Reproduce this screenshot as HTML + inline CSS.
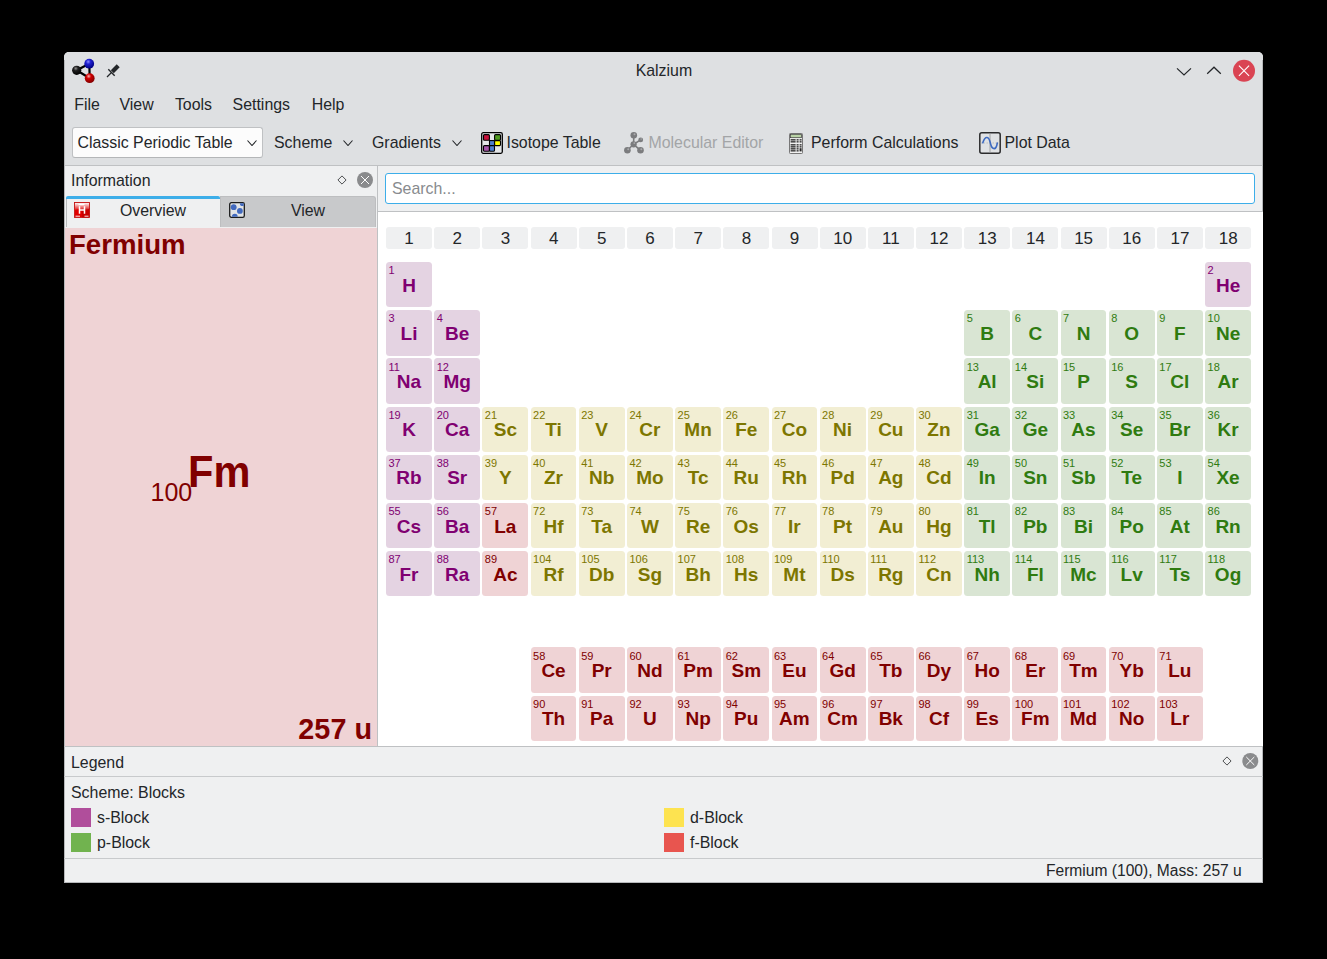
<!DOCTYPE html>
<html><head><meta charset="utf-8"><title>Kalzium</title>
<style>
html,body{margin:0;padding:0}
body{width:1327px;height:959px;background:#000;position:relative;overflow:hidden;font-family:"Liberation Sans",sans-serif;color:#232629}
.t{position:absolute;line-height:1;white-space:nowrap}
.r{position:absolute}
.svg{position:absolute}
.cell{position:absolute;width:45.8px;height:45.4px;border-radius:3.5px}
.cell .n{position:absolute;left:2.4px;top:3.3px;font-size:11px;line-height:1}
.cell .s{position:absolute;left:0;width:45.8px;text-align:center;top:14.3px;font-size:19px;line-height:1;font-weight:700}
.gh{position:absolute;top:227px;width:46px;height:22px;background:#eff0f1;border-radius:3px;font-size:17px;line-height:24px;text-align:center;color:#232629}
.s1{background:#e4d3e2;color:#800071}
.d1{background:#f2eed3;color:#7d7600}
.p1{background:#d9e5d3;color:#2f7b10}
.f1{background:#efd3d5;color:#800000}
</style></head><body>
<div class="r" style="left:64px;top:52px;width:1199px;height:831px;background:#eff0f1;border-radius:5px 5px 0 0;"></div>
<div class="r" style="left:64px;top:52px;width:1199px;height:113px;background:#dee0e2;border-radius:5px 5px 0 0;"></div>
<div class="r" style="left:64px;top:165px;width:1199px;height:1px;background:#bfc1c3;"></div>
<div class="r" style="left:64px;top:60px;width:1px;height:823px;background:#b6b8ba;"></div>
<div class="r" style="left:1262px;top:60px;width:1px;height:823px;background:#b6b8ba;"></div>
<div class="r" style="left:64px;top:882px;width:1199px;height:1px;background:#b6b8ba;"></div>
<div class="t" style="left:563.90px;width:200px;text-align:center;top:62.84px;font-size:15.9px;">Kalzium</div>
<div class="t" style="left:74.3px;top:96.84px;font-size:15.9px;">File</div>
<div class="t" style="left:119.5px;top:96.84px;font-size:15.9px;">View</div>
<div class="t" style="left:174.9px;top:96.84px;font-size:15.9px;">Tools</div>
<div class="t" style="left:232.6px;top:96.84px;font-size:15.9px;">Settings</div>
<div class="t" style="left:311.7px;top:96.84px;font-size:15.9px;">Help</div>
<div class="r" style="left:72px;top:127px;width:191px;height:31px;background:#fcfcfc;border:1px solid #bfc1c3;border-bottom-color:#b4b6b8;box-sizing:border-box;border-radius:3px;"></div>
<div class="t" style="left:77.5px;top:134.84px;font-size:15.9px;">Classic Periodic Table</div>
<svg class="svg" style="left:247px;top:139.6px" width="10" height="6" viewBox="0 0 10 6"><path d="M0.5 0.5 L5.0 5.5 L9.5 0.5" fill="none" stroke="#232629" stroke-width="1.1"/></svg>
<div class="t" style="left:274px;top:134.84px;font-size:15.9px;">Scheme</div>
<svg class="svg" style="left:343px;top:139.6px" width="10" height="6" viewBox="0 0 10 6"><path d="M0.5 0.5 L5.0 5.5 L9.5 0.5" fill="none" stroke="#232629" stroke-width="1.1"/></svg>
<div class="t" style="left:372px;top:134.84px;font-size:15.9px;">Gradients</div>
<svg class="svg" style="left:452px;top:139.6px" width="10" height="6" viewBox="0 0 10 6"><path d="M0.5 0.5 L5.0 5.5 L9.5 0.5" fill="none" stroke="#232629" stroke-width="1.1"/></svg>
<div class="t" style="left:506.5px;top:134.84px;font-size:15.9px;">Isotope Table</div>
<div class="t" style="left:648.5px;top:134.84px;font-size:15.9px;color:#a3a5a7;">Molecular Editor</div>
<div class="t" style="left:811px;top:134.84px;font-size:15.9px;">Perform Calculations</div>
<div class="t" style="left:1004.5px;top:134.84px;font-size:15.9px;">Plot Data</div>
<div class="t" style="left:71px;top:172.54px;font-size:15.9px;">Information</div>
<div class="r" style="left:377px;top:166px;width:1px;height:580px;background:#bfc1c3;"></div>
<div class="r" style="left:66px;top:196px;width:154px;height:32px;background:#eff0f1;"></div>
<div class="r" style="left:66px;top:199px;width:1px;height:28px;background:#b8babc;"></div>
<div class="r" style="left:66px;top:196px;width:154px;height:3px;background:#3daee9;border-radius:2px 2px 0 0;"></div>
<div class="r" style="left:220px;top:196px;width:156px;height:31px;background:#c8c9cb;border:1px solid #bdbec0;border-bottom:none;box-sizing:border-box;border-radius:0 3px 0 0;"></div>
<div class="t" style="left:103.00px;width:100px;text-align:center;top:202.54px;font-size:15.9px;">Overview</div>
<div class="t" style="left:258.00px;width:100px;text-align:center;top:202.54px;font-size:15.9px;">View</div>
<div class="r" style="left:65px;top:228px;width:312px;height:518px;background:#efd3d5;"></div>
<div class="t" style="left:69px;top:230.84px;font-size:27.6px;font-weight:700;color:#800000;">Fermium</div>
<div class="t" style="left:150.5px;top:480.04px;font-size:25px;color:#800000;">100</div>
<div class="t" style="left:188.2px;top:451.38px;font-size:43.5px;font-weight:700;color:#800000;transform:scaleX(0.955);transform-origin:0 0;">Fm</div>
<div class="t" style="left:222.00px;width:150px;text-align:right;top:714.82px;font-size:28.8px;font-weight:700;color:#800000;">257 u</div>
<div class="r" style="left:385px;top:173px;width:870px;height:31px;background:#fff;border:1px solid #3daee9;box-sizing:border-box;border-radius:3px;"></div>
<div class="t" style="left:392px;top:180.84px;font-size:15.9px;color:#888b8e;">Search...</div>
<div class="r" style="left:378px;top:211px;width:885px;height:1px;background:#bfc1c3;"></div>
<div class="r" style="left:378px;top:212px;width:885px;height:534px;background:#ffffff;"></div>
<div class="r" style="left:64px;top:746px;width:1199px;height:1px;background:#bfc1c3;"></div>
<div class="gh" style="left:386.10px">1</div>
<div class="gh" style="left:434.28px">2</div>
<div class="gh" style="left:482.46px">3</div>
<div class="gh" style="left:530.64px">4</div>
<div class="gh" style="left:578.82px">5</div>
<div class="gh" style="left:627.00px">6</div>
<div class="gh" style="left:675.18px">7</div>
<div class="gh" style="left:723.36px">8</div>
<div class="gh" style="left:771.54px">9</div>
<div class="gh" style="left:819.72px">10</div>
<div class="gh" style="left:867.90px">11</div>
<div class="gh" style="left:916.08px">12</div>
<div class="gh" style="left:964.26px">13</div>
<div class="gh" style="left:1012.44px">14</div>
<div class="gh" style="left:1060.62px">15</div>
<div class="gh" style="left:1108.80px">16</div>
<div class="gh" style="left:1156.98px">17</div>
<div class="gh" style="left:1205.16px">18</div>
<div class="cell s1" style="left:386.10px;top:262.00px"><div class="n">1</div><div class="s" style="top:14.22px">H</div></div>
<div class="cell s1" style="left:1205.16px;top:262.00px"><div class="n">2</div><div class="s" style="top:14.22px">He</div></div>
<div class="cell s1" style="left:386.10px;top:310.18px"><div class="n">3</div><div class="s" style="top:14.04px">Li</div></div>
<div class="cell s1" style="left:434.28px;top:310.18px"><div class="n">4</div><div class="s" style="top:14.04px">Be</div></div>
<div class="cell p1" style="left:964.26px;top:310.18px"><div class="n">5</div><div class="s" style="top:14.04px">B</div></div>
<div class="cell p1" style="left:1012.44px;top:310.18px"><div class="n">6</div><div class="s" style="top:14.04px">C</div></div>
<div class="cell p1" style="left:1060.62px;top:310.18px"><div class="n">7</div><div class="s" style="top:14.04px">N</div></div>
<div class="cell p1" style="left:1108.80px;top:310.18px"><div class="n">8</div><div class="s" style="top:14.04px">O</div></div>
<div class="cell p1" style="left:1156.98px;top:310.18px"><div class="n">9</div><div class="s" style="top:14.04px">F</div></div>
<div class="cell p1" style="left:1205.16px;top:310.18px"><div class="n">10</div><div class="s" style="top:14.04px">Ne</div></div>
<div class="cell s1" style="left:386.10px;top:358.36px"><div class="n">11</div><div class="s" style="top:13.86px">Na</div></div>
<div class="cell s1" style="left:434.28px;top:358.36px"><div class="n">12</div><div class="s" style="top:13.86px">Mg</div></div>
<div class="cell p1" style="left:964.26px;top:358.36px"><div class="n">13</div><div class="s" style="top:13.86px">Al</div></div>
<div class="cell p1" style="left:1012.44px;top:358.36px"><div class="n">14</div><div class="s" style="top:13.86px">Si</div></div>
<div class="cell p1" style="left:1060.62px;top:358.36px"><div class="n">15</div><div class="s" style="top:13.86px">P</div></div>
<div class="cell p1" style="left:1108.80px;top:358.36px"><div class="n">16</div><div class="s" style="top:13.86px">S</div></div>
<div class="cell p1" style="left:1156.98px;top:358.36px"><div class="n">17</div><div class="s" style="top:13.86px">Cl</div></div>
<div class="cell p1" style="left:1205.16px;top:358.36px"><div class="n">18</div><div class="s" style="top:13.86px">Ar</div></div>
<div class="cell s1" style="left:386.10px;top:406.54px"><div class="n">19</div><div class="s" style="top:13.68px">K</div></div>
<div class="cell s1" style="left:434.28px;top:406.54px"><div class="n">20</div><div class="s" style="top:13.68px">Ca</div></div>
<div class="cell d1" style="left:482.46px;top:406.54px"><div class="n">21</div><div class="s" style="top:13.68px">Sc</div></div>
<div class="cell d1" style="left:530.64px;top:406.54px"><div class="n">22</div><div class="s" style="top:13.68px">Ti</div></div>
<div class="cell d1" style="left:578.82px;top:406.54px"><div class="n">23</div><div class="s" style="top:13.68px">V</div></div>
<div class="cell d1" style="left:627.00px;top:406.54px"><div class="n">24</div><div class="s" style="top:13.68px">Cr</div></div>
<div class="cell d1" style="left:675.18px;top:406.54px"><div class="n">25</div><div class="s" style="top:13.68px">Mn</div></div>
<div class="cell d1" style="left:723.36px;top:406.54px"><div class="n">26</div><div class="s" style="top:13.68px">Fe</div></div>
<div class="cell d1" style="left:771.54px;top:406.54px"><div class="n">27</div><div class="s" style="top:13.68px">Co</div></div>
<div class="cell d1" style="left:819.72px;top:406.54px"><div class="n">28</div><div class="s" style="top:13.68px">Ni</div></div>
<div class="cell d1" style="left:867.90px;top:406.54px"><div class="n">29</div><div class="s" style="top:13.68px">Cu</div></div>
<div class="cell d1" style="left:916.08px;top:406.54px"><div class="n">30</div><div class="s" style="top:13.68px">Zn</div></div>
<div class="cell p1" style="left:964.26px;top:406.54px"><div class="n">31</div><div class="s" style="top:13.68px">Ga</div></div>
<div class="cell p1" style="left:1012.44px;top:406.54px"><div class="n">32</div><div class="s" style="top:13.68px">Ge</div></div>
<div class="cell p1" style="left:1060.62px;top:406.54px"><div class="n">33</div><div class="s" style="top:13.68px">As</div></div>
<div class="cell p1" style="left:1108.80px;top:406.54px"><div class="n">34</div><div class="s" style="top:13.68px">Se</div></div>
<div class="cell p1" style="left:1156.98px;top:406.54px"><div class="n">35</div><div class="s" style="top:13.68px">Br</div></div>
<div class="cell p1" style="left:1205.16px;top:406.54px"><div class="n">36</div><div class="s" style="top:13.68px">Kr</div></div>
<div class="cell s1" style="left:386.10px;top:454.72px"><div class="n">37</div><div class="s" style="top:13.50px">Rb</div></div>
<div class="cell s1" style="left:434.28px;top:454.72px"><div class="n">38</div><div class="s" style="top:13.50px">Sr</div></div>
<div class="cell d1" style="left:482.46px;top:454.72px"><div class="n">39</div><div class="s" style="top:13.50px">Y</div></div>
<div class="cell d1" style="left:530.64px;top:454.72px"><div class="n">40</div><div class="s" style="top:13.50px">Zr</div></div>
<div class="cell d1" style="left:578.82px;top:454.72px"><div class="n">41</div><div class="s" style="top:13.50px">Nb</div></div>
<div class="cell d1" style="left:627.00px;top:454.72px"><div class="n">42</div><div class="s" style="top:13.50px">Mo</div></div>
<div class="cell d1" style="left:675.18px;top:454.72px"><div class="n">43</div><div class="s" style="top:13.50px">Tc</div></div>
<div class="cell d1" style="left:723.36px;top:454.72px"><div class="n">44</div><div class="s" style="top:13.50px">Ru</div></div>
<div class="cell d1" style="left:771.54px;top:454.72px"><div class="n">45</div><div class="s" style="top:13.50px">Rh</div></div>
<div class="cell d1" style="left:819.72px;top:454.72px"><div class="n">46</div><div class="s" style="top:13.50px">Pd</div></div>
<div class="cell d1" style="left:867.90px;top:454.72px"><div class="n">47</div><div class="s" style="top:13.50px">Ag</div></div>
<div class="cell d1" style="left:916.08px;top:454.72px"><div class="n">48</div><div class="s" style="top:13.50px">Cd</div></div>
<div class="cell p1" style="left:964.26px;top:454.72px"><div class="n">49</div><div class="s" style="top:13.50px">In</div></div>
<div class="cell p1" style="left:1012.44px;top:454.72px"><div class="n">50</div><div class="s" style="top:13.50px">Sn</div></div>
<div class="cell p1" style="left:1060.62px;top:454.72px"><div class="n">51</div><div class="s" style="top:13.50px">Sb</div></div>
<div class="cell p1" style="left:1108.80px;top:454.72px"><div class="n">52</div><div class="s" style="top:13.50px">Te</div></div>
<div class="cell p1" style="left:1156.98px;top:454.72px"><div class="n">53</div><div class="s" style="top:13.50px">I</div></div>
<div class="cell p1" style="left:1205.16px;top:454.72px"><div class="n">54</div><div class="s" style="top:13.50px">Xe</div></div>
<div class="cell s1" style="left:386.10px;top:502.90px"><div class="n">55</div><div class="s" style="top:14.32px">Cs</div></div>
<div class="cell s1" style="left:434.28px;top:502.90px"><div class="n">56</div><div class="s" style="top:14.32px">Ba</div></div>
<div class="cell f1" style="left:482.46px;top:502.90px"><div class="n">57</div><div class="s" style="top:14.32px">La</div></div>
<div class="cell f1" style="left:530.64px;top:647.44px"><div class="n">58</div><div class="s" style="top:13.78px">Ce</div></div>
<div class="cell f1" style="left:578.82px;top:647.44px"><div class="n">59</div><div class="s" style="top:13.78px">Pr</div></div>
<div class="cell f1" style="left:627.00px;top:647.44px"><div class="n">60</div><div class="s" style="top:13.78px">Nd</div></div>
<div class="cell f1" style="left:675.18px;top:647.44px"><div class="n">61</div><div class="s" style="top:13.78px">Pm</div></div>
<div class="cell f1" style="left:723.36px;top:647.44px"><div class="n">62</div><div class="s" style="top:13.78px">Sm</div></div>
<div class="cell f1" style="left:771.54px;top:647.44px"><div class="n">63</div><div class="s" style="top:13.78px">Eu</div></div>
<div class="cell f1" style="left:819.72px;top:647.44px"><div class="n">64</div><div class="s" style="top:13.78px">Gd</div></div>
<div class="cell f1" style="left:867.90px;top:647.44px"><div class="n">65</div><div class="s" style="top:13.78px">Tb</div></div>
<div class="cell f1" style="left:916.08px;top:647.44px"><div class="n">66</div><div class="s" style="top:13.78px">Dy</div></div>
<div class="cell f1" style="left:964.26px;top:647.44px"><div class="n">67</div><div class="s" style="top:13.78px">Ho</div></div>
<div class="cell f1" style="left:1012.44px;top:647.44px"><div class="n">68</div><div class="s" style="top:13.78px">Er</div></div>
<div class="cell f1" style="left:1060.62px;top:647.44px"><div class="n">69</div><div class="s" style="top:13.78px">Tm</div></div>
<div class="cell f1" style="left:1108.80px;top:647.44px"><div class="n">70</div><div class="s" style="top:13.78px">Yb</div></div>
<div class="cell f1" style="left:1156.98px;top:647.44px"><div class="n">71</div><div class="s" style="top:13.78px">Lu</div></div>
<div class="cell d1" style="left:530.64px;top:502.90px"><div class="n">72</div><div class="s" style="top:14.32px">Hf</div></div>
<div class="cell d1" style="left:578.82px;top:502.90px"><div class="n">73</div><div class="s" style="top:14.32px">Ta</div></div>
<div class="cell d1" style="left:627.00px;top:502.90px"><div class="n">74</div><div class="s" style="top:14.32px">W</div></div>
<div class="cell d1" style="left:675.18px;top:502.90px"><div class="n">75</div><div class="s" style="top:14.32px">Re</div></div>
<div class="cell d1" style="left:723.36px;top:502.90px"><div class="n">76</div><div class="s" style="top:14.32px">Os</div></div>
<div class="cell d1" style="left:771.54px;top:502.90px"><div class="n">77</div><div class="s" style="top:14.32px">Ir</div></div>
<div class="cell d1" style="left:819.72px;top:502.90px"><div class="n">78</div><div class="s" style="top:14.32px">Pt</div></div>
<div class="cell d1" style="left:867.90px;top:502.90px"><div class="n">79</div><div class="s" style="top:14.32px">Au</div></div>
<div class="cell d1" style="left:916.08px;top:502.90px"><div class="n">80</div><div class="s" style="top:14.32px">Hg</div></div>
<div class="cell p1" style="left:964.26px;top:502.90px"><div class="n">81</div><div class="s" style="top:14.32px">Tl</div></div>
<div class="cell p1" style="left:1012.44px;top:502.90px"><div class="n">82</div><div class="s" style="top:14.32px">Pb</div></div>
<div class="cell p1" style="left:1060.62px;top:502.90px"><div class="n">83</div><div class="s" style="top:14.32px">Bi</div></div>
<div class="cell p1" style="left:1108.80px;top:502.90px"><div class="n">84</div><div class="s" style="top:14.32px">Po</div></div>
<div class="cell p1" style="left:1156.98px;top:502.90px"><div class="n">85</div><div class="s" style="top:14.32px">At</div></div>
<div class="cell p1" style="left:1205.16px;top:502.90px"><div class="n">86</div><div class="s" style="top:14.32px">Rn</div></div>
<div class="cell s1" style="left:386.10px;top:551.08px"><div class="n">87</div><div class="s" style="top:14.14px">Fr</div></div>
<div class="cell s1" style="left:434.28px;top:551.08px"><div class="n">88</div><div class="s" style="top:14.14px">Ra</div></div>
<div class="cell f1" style="left:482.46px;top:551.08px"><div class="n">89</div><div class="s" style="top:14.14px">Ac</div></div>
<div class="cell f1" style="left:530.64px;top:695.62px"><div class="n">90</div><div class="s" style="top:13.60px">Th</div></div>
<div class="cell f1" style="left:578.82px;top:695.62px"><div class="n">91</div><div class="s" style="top:13.60px">Pa</div></div>
<div class="cell f1" style="left:627.00px;top:695.62px"><div class="n">92</div><div class="s" style="top:13.60px">U</div></div>
<div class="cell f1" style="left:675.18px;top:695.62px"><div class="n">93</div><div class="s" style="top:13.60px">Np</div></div>
<div class="cell f1" style="left:723.36px;top:695.62px"><div class="n">94</div><div class="s" style="top:13.60px">Pu</div></div>
<div class="cell f1" style="left:771.54px;top:695.62px"><div class="n">95</div><div class="s" style="top:13.60px">Am</div></div>
<div class="cell f1" style="left:819.72px;top:695.62px"><div class="n">96</div><div class="s" style="top:13.60px">Cm</div></div>
<div class="cell f1" style="left:867.90px;top:695.62px"><div class="n">97</div><div class="s" style="top:13.60px">Bk</div></div>
<div class="cell f1" style="left:916.08px;top:695.62px"><div class="n">98</div><div class="s" style="top:13.60px">Cf</div></div>
<div class="cell f1" style="left:964.26px;top:695.62px"><div class="n">99</div><div class="s" style="top:13.60px">Es</div></div>
<div class="cell f1" style="left:1012.44px;top:695.62px"><div class="n">100</div><div class="s" style="top:13.60px">Fm</div></div>
<div class="cell f1" style="left:1060.62px;top:695.62px"><div class="n">101</div><div class="s" style="top:13.60px">Md</div></div>
<div class="cell f1" style="left:1108.80px;top:695.62px"><div class="n">102</div><div class="s" style="top:13.60px">No</div></div>
<div class="cell f1" style="left:1156.98px;top:695.62px"><div class="n">103</div><div class="s" style="top:13.60px">Lr</div></div>
<div class="cell d1" style="left:530.64px;top:551.08px"><div class="n">104</div><div class="s" style="top:14.14px">Rf</div></div>
<div class="cell d1" style="left:578.82px;top:551.08px"><div class="n">105</div><div class="s" style="top:14.14px">Db</div></div>
<div class="cell d1" style="left:627.00px;top:551.08px"><div class="n">106</div><div class="s" style="top:14.14px">Sg</div></div>
<div class="cell d1" style="left:675.18px;top:551.08px"><div class="n">107</div><div class="s" style="top:14.14px">Bh</div></div>
<div class="cell d1" style="left:723.36px;top:551.08px"><div class="n">108</div><div class="s" style="top:14.14px">Hs</div></div>
<div class="cell d1" style="left:771.54px;top:551.08px"><div class="n">109</div><div class="s" style="top:14.14px">Mt</div></div>
<div class="cell d1" style="left:819.72px;top:551.08px"><div class="n">110</div><div class="s" style="top:14.14px">Ds</div></div>
<div class="cell d1" style="left:867.90px;top:551.08px"><div class="n">111</div><div class="s" style="top:14.14px">Rg</div></div>
<div class="cell d1" style="left:916.08px;top:551.08px"><div class="n">112</div><div class="s" style="top:14.14px">Cn</div></div>
<div class="cell p1" style="left:964.26px;top:551.08px"><div class="n">113</div><div class="s" style="top:14.14px">Nh</div></div>
<div class="cell p1" style="left:1012.44px;top:551.08px"><div class="n">114</div><div class="s" style="top:14.14px">Fl</div></div>
<div class="cell p1" style="left:1060.62px;top:551.08px"><div class="n">115</div><div class="s" style="top:14.14px">Mc</div></div>
<div class="cell p1" style="left:1108.80px;top:551.08px"><div class="n">116</div><div class="s" style="top:14.14px">Lv</div></div>
<div class="cell p1" style="left:1156.98px;top:551.08px"><div class="n">117</div><div class="s" style="top:14.14px">Ts</div></div>
<div class="cell p1" style="left:1205.16px;top:551.08px"><div class="n">118</div><div class="s" style="top:14.14px">Og</div></div>
<div class="t" style="left:71px;top:754.54px;font-size:15.9px;">Legend</div>
<div class="r" style="left:64px;top:776px;width:1199px;height:1px;background:#c8cacc;"></div>
<div class="t" style="left:71px;top:784.94px;font-size:15.9px;">Scheme: Blocks</div>
<div class="r" style="left:71px;top:808px;width:20px;height:19px;background:#b04e9b;"></div>
<div class="r" style="left:71px;top:833px;width:20px;height:19px;background:#71b34f;"></div>
<div class="r" style="left:664px;top:808px;width:20px;height:19px;background:#fde350;"></div>
<div class="r" style="left:664px;top:833px;width:20px;height:19px;background:#e8554f;"></div>
<div class="t" style="left:97px;top:810.04px;font-size:15.9px;">s-Block</div>
<div class="t" style="left:97px;top:835.04px;font-size:15.9px;">p-Block</div>
<div class="t" style="left:690px;top:810.04px;font-size:15.9px;">d-Block</div>
<div class="t" style="left:690px;top:835.04px;font-size:15.9px;">f-Block</div>
<div class="r" style="left:64px;top:858px;width:1199px;height:1px;background:#c8cacc;"></div>
<div class="t" style="left:941.80px;width:300px;text-align:right;top:862.79px;font-size:15.6px;">Fermium (100), Mass: 257 u</div>
<svg class="svg" style="left:68px;top:56px" width="28" height="28" viewBox="68 56 28 28">
<defs>
<radialGradient id="gb" cx="0.4" cy="0.3" r="0.7"><stop offset="0" stop-color="#8a8aff"/><stop offset="0.35" stop-color="#2020d0"/><stop offset="1" stop-color="#000080"/></radialGradient>
<radialGradient id="gr" cx="0.4" cy="0.3" r="0.7"><stop offset="0" stop-color="#ffb0b0"/><stop offset="0.35" stop-color="#d00000"/><stop offset="1" stop-color="#800000"/></radialGradient>
<radialGradient id="gk" cx="0.4" cy="0.3" r="0.7"><stop offset="0" stop-color="#909090"/><stop offset="0.35" stop-color="#202020"/><stop offset="1" stop-color="#000"/></radialGradient>
</defs>
<g stroke="#000" stroke-width="2.2"><line x1="76.7" y1="70.3" x2="89.2" y2="63.7"/><line x1="76.7" y1="70.3" x2="89.7" y2="78.2"/><line x1="89.4" y1="64" x2="89.6" y2="78"/></g>
<circle cx="76.7" cy="70.3" r="4.6" fill="url(#gk)"/>
<circle cx="89.2" cy="63.7" r="4.9" fill="url(#gb)"/>
<circle cx="89.7" cy="78.2" r="4.9" fill="url(#gr)"/>
</svg>
<svg class="svg" style="left:104px;top:60px" width="20" height="20" viewBox="104 60 20 20">
<g stroke="#232629" stroke-linecap="butt">
<line x1="112.3" y1="71.7" x2="118.2" y2="65.8" stroke-width="4.2"/>
<line x1="108.3" y1="69.3" x2="114.7" y2="75.7" stroke-width="1.4"/>
<line x1="111.5" y1="72.5" x2="107" y2="77" stroke-width="1.3"/>
</g></svg>
<svg class="svg" style="left:1170px;top:58px" width="90" height="26" viewBox="1170 58 90 26">
<path d="M1177 68.4 L1184 75 L1191 68.4" fill="none" stroke="#232629" stroke-width="1.2"/>
<path d="M1207.2 73.8 L1214 67.2 L1220.8 73.8" fill="none" stroke="#232629" stroke-width="1.2"/>
<circle cx="1244" cy="70.8" r="11" fill="#da4453"/>
<path d="M1238.9 65.7 L1249.1 75.9 M1249.1 65.7 L1238.9 75.9" stroke="#fff" stroke-width="1.1"/>
</svg>
<svg class="svg" style="left:334px;top:170px" width="43" height="20" viewBox="334 170 43 20">
<path d="M342 175.9 L346.1 180 L342 184.1 L337.9 180 Z" fill="none" stroke="#4d4f51" stroke-width="1"/>
<circle cx="365" cy="180" r="8" fill="#8a8b8d"/>
<path d="M361 176 L369 184 M369 176 L361 184" stroke="#fff" stroke-width="1"/>
</svg>
<svg class="svg" style="left:1218.7px;top:751px" width="43.299999999999955" height="20" viewBox="1218.7 751 43.299999999999955 20">
<path d="M1226.7 756.9 L1230.8 761 L1226.7 765.1 L1222.6000000000001 761 Z" fill="none" stroke="#4d4f51" stroke-width="1"/>
<circle cx="1250" cy="761" r="8" fill="#8a8b8d"/>
<path d="M1246 757 L1254 765 M1254 757 L1246 765" stroke="#fff" stroke-width="1"/>
</svg>
<svg class="svg" style="left:74px;top:202px" width="16" height="16" viewBox="0 0 16 16">
<defs><linearGradient id="hg" x1="0" y1="0" x2="1" y2="1"><stop offset="0" stop-color="#f4a0a0"/><stop offset="0.45" stop-color="#e00000"/><stop offset="1" stop-color="#b00000"/></linearGradient></defs>
<defs><linearGradient id="hgl" x1="0" y1="0" x2="0" y2="1"><stop offset="0" stop-color="#fff" stop-opacity="0.95"/><stop offset="1" stop-color="#fff" stop-opacity="0.1"/></linearGradient></defs>
<rect x="0.5" y="0.5" width="15" height="15" fill="#e00000" stroke="#c01010" stroke-width="0.8"/>
<rect x="8" y="6" width="7.5" height="9.5" fill="#b80000" opacity="0.6"/>
<path d="M1 1 H15 V7 C11 9 5 6 1 8 Z" fill="url(#hgl)"/>
<path d="M5.5 4.3 V11.8 M10.5 4.3 V11.8 M5.5 8 H10.5 M4.5 2.6 H10.5" stroke="#fff" stroke-width="1.5" fill="none"/>
<path d="M1.5 14.2 H6 M10.5 14.2 H14.5" stroke="#fff" stroke-width="0.9"/>
</svg>
<svg class="svg" style="left:229px;top:202px" width="16" height="16" viewBox="0 0 16 16">
<rect x="0.7" y="0.7" width="14.6" height="14.6" rx="1.6" fill="#e2e4e6" stroke="#1b1c1d" stroke-width="1.3"/>
<circle cx="4.7" cy="5.2" r="2.9" fill="#4169be"/>
<circle cx="10.9" cy="8.9" r="2.9" fill="#4169be"/>
<clipPath id="vc"><rect x="1.3" y="1.3" width="13.4" height="13.4"/></clipPath>
<g clip-path="url(#vc)"><circle cx="5.8" cy="14.6" r="2.9" fill="#4169be"/><circle cx="13.5" cy="1.4" r="2.6" fill="#4169be"/></g>
</svg>
<svg class="svg" style="left:481px;top:132px" width="22" height="22" viewBox="0 0 22 22">
<rect x="0.7" y="0.7" width="20.6" height="20.6" rx="1.5" fill="#e4e6e8" stroke="#000" stroke-width="1.3"/>
<g stroke="#000" stroke-width="1.1">
<rect x="2.5" y="2.6" width="5.9" height="5.7" rx="1" fill="#c8103a"/>
<rect x="13.6" y="2.6" width="5.9" height="5.7" rx="1" fill="#4f9a1f"/>
<rect x="8.5" y="8.6" width="5" height="5" fill="#4f7fd0"/>
<rect x="13.6" y="8.6" width="5.9" height="5" rx="1" fill="#ffff00"/>
<rect x="2.5" y="13.6" width="5.9" height="5.6" rx="1" fill="#a855ab"/>
<rect x="8.5" y="13.6" width="5" height="5.6" rx="1" fill="#4f7fd0"/>
</g></svg>
<svg class="svg" style="left:622px;top:130px" width="22" height="25" viewBox="622 130 22 25">
<g stroke="#7b7c7e" stroke-width="1.6"><line x1="633.8" y1="135.3" x2="633.6" y2="144.3"/><line x1="633.6" y1="144.3" x2="640.7" y2="139.9"/><line x1="633.6" y1="144.3" x2="627.4" y2="150.3"/><line x1="633.6" y1="144.3" x2="640.5" y2="150.3"/></g>
<g fill="#7b7c7e"><circle cx="633.8" cy="135.3" r="3.3"/><circle cx="640.7" cy="139.9" r="2.4"/><circle cx="633.6" cy="144.3" r="3.1"/><circle cx="627.4" cy="150.3" r="3.3"/><circle cx="640.5" cy="150.3" r="3.3"/></g>
<g fill="#a9aaac"><circle cx="634.5" cy="134.2" r="1"/><circle cx="641.2" cy="139" r="0.8"/><circle cx="634.3" cy="143.1" r="0.9"/><circle cx="628.2" cy="149.2" r="1"/><circle cx="641.3" cy="149.2" r="1"/></g>
</svg>
<svg class="svg" style="left:789px;top:133px" width="14" height="21" viewBox="0 0 14 21">
<rect x="0.5" y="0.5" width="13" height="20" rx="0.8" fill="#f0f0f0" stroke="#6a6a6a" stroke-width="0.9"/>
<rect x="1.5" y="1.3" width="11" height="3.4" fill="#b9d3a6" stroke="#3a3a3a" stroke-width="0.7"/>
<g fill="#262626">
<rect x="1.6" y="6.2" width="5" height="1.3"/><rect x="7.6" y="6.2" width="2" height="1.3"/><rect x="10.6" y="6.2" width="2" height="1.3"/>
<rect x="1.6" y="8.2" width="5" height="1.3"/><rect x="7.6" y="8.2" width="2" height="1.3"/><rect x="10.6" y="8.2" width="2" height="1.3"/>
<rect x="1.6" y="11.2" width="5" height="1.3"/><rect x="7.6" y="11.2" width="2" height="1.3"/><rect x="10.6" y="11.2" width="2" height="1.3"/>
<rect x="1.6" y="13.2" width="5" height="1.3"/><rect x="7.6" y="13.2" width="2" height="1.3"/><rect x="10.6" y="13.2" width="2" height="1.3"/>
<rect x="1.6" y="15.2" width="5" height="1.3"/><rect x="7.6" y="15.2" width="2" height="1.3"/><rect x="10.6" y="15.2" width="2" height="3.2"/>
<rect x="1.6" y="17.2" width="5" height="1.3"/><rect x="7.6" y="17.2" width="2" height="1.3"/>
</g></svg>
<svg class="svg" style="left:979px;top:132px" width="22" height="22" viewBox="0 0 22 22">
<rect x="0.8" y="0.8" width="20.4" height="20.4" rx="2" fill="#e0e2e4" stroke="#2a2b2c" stroke-width="1.5"/>
<line x1="11" y1="1.5" x2="11" y2="20.5" stroke="#9a9c9e" stroke-width="0.9"/>
<line x1="1.5" y1="11" x2="20.5" y2="11" stroke="#b0b2b4" stroke-width="0.7" stroke-dasharray="1.5 1.5"/>
<path d="M3.8 10.8 C5 7 6 5.5 7.8 5.5 C10.5 5.5 10.8 9 11.6 12 C12.4 15 13.2 16.6 15.2 16.6 C17.2 16.6 17.8 14 18.3 11" fill="none" stroke="#3e6bc1" stroke-width="1.6" stroke-linecap="round"/>
</svg>
</body></html>
